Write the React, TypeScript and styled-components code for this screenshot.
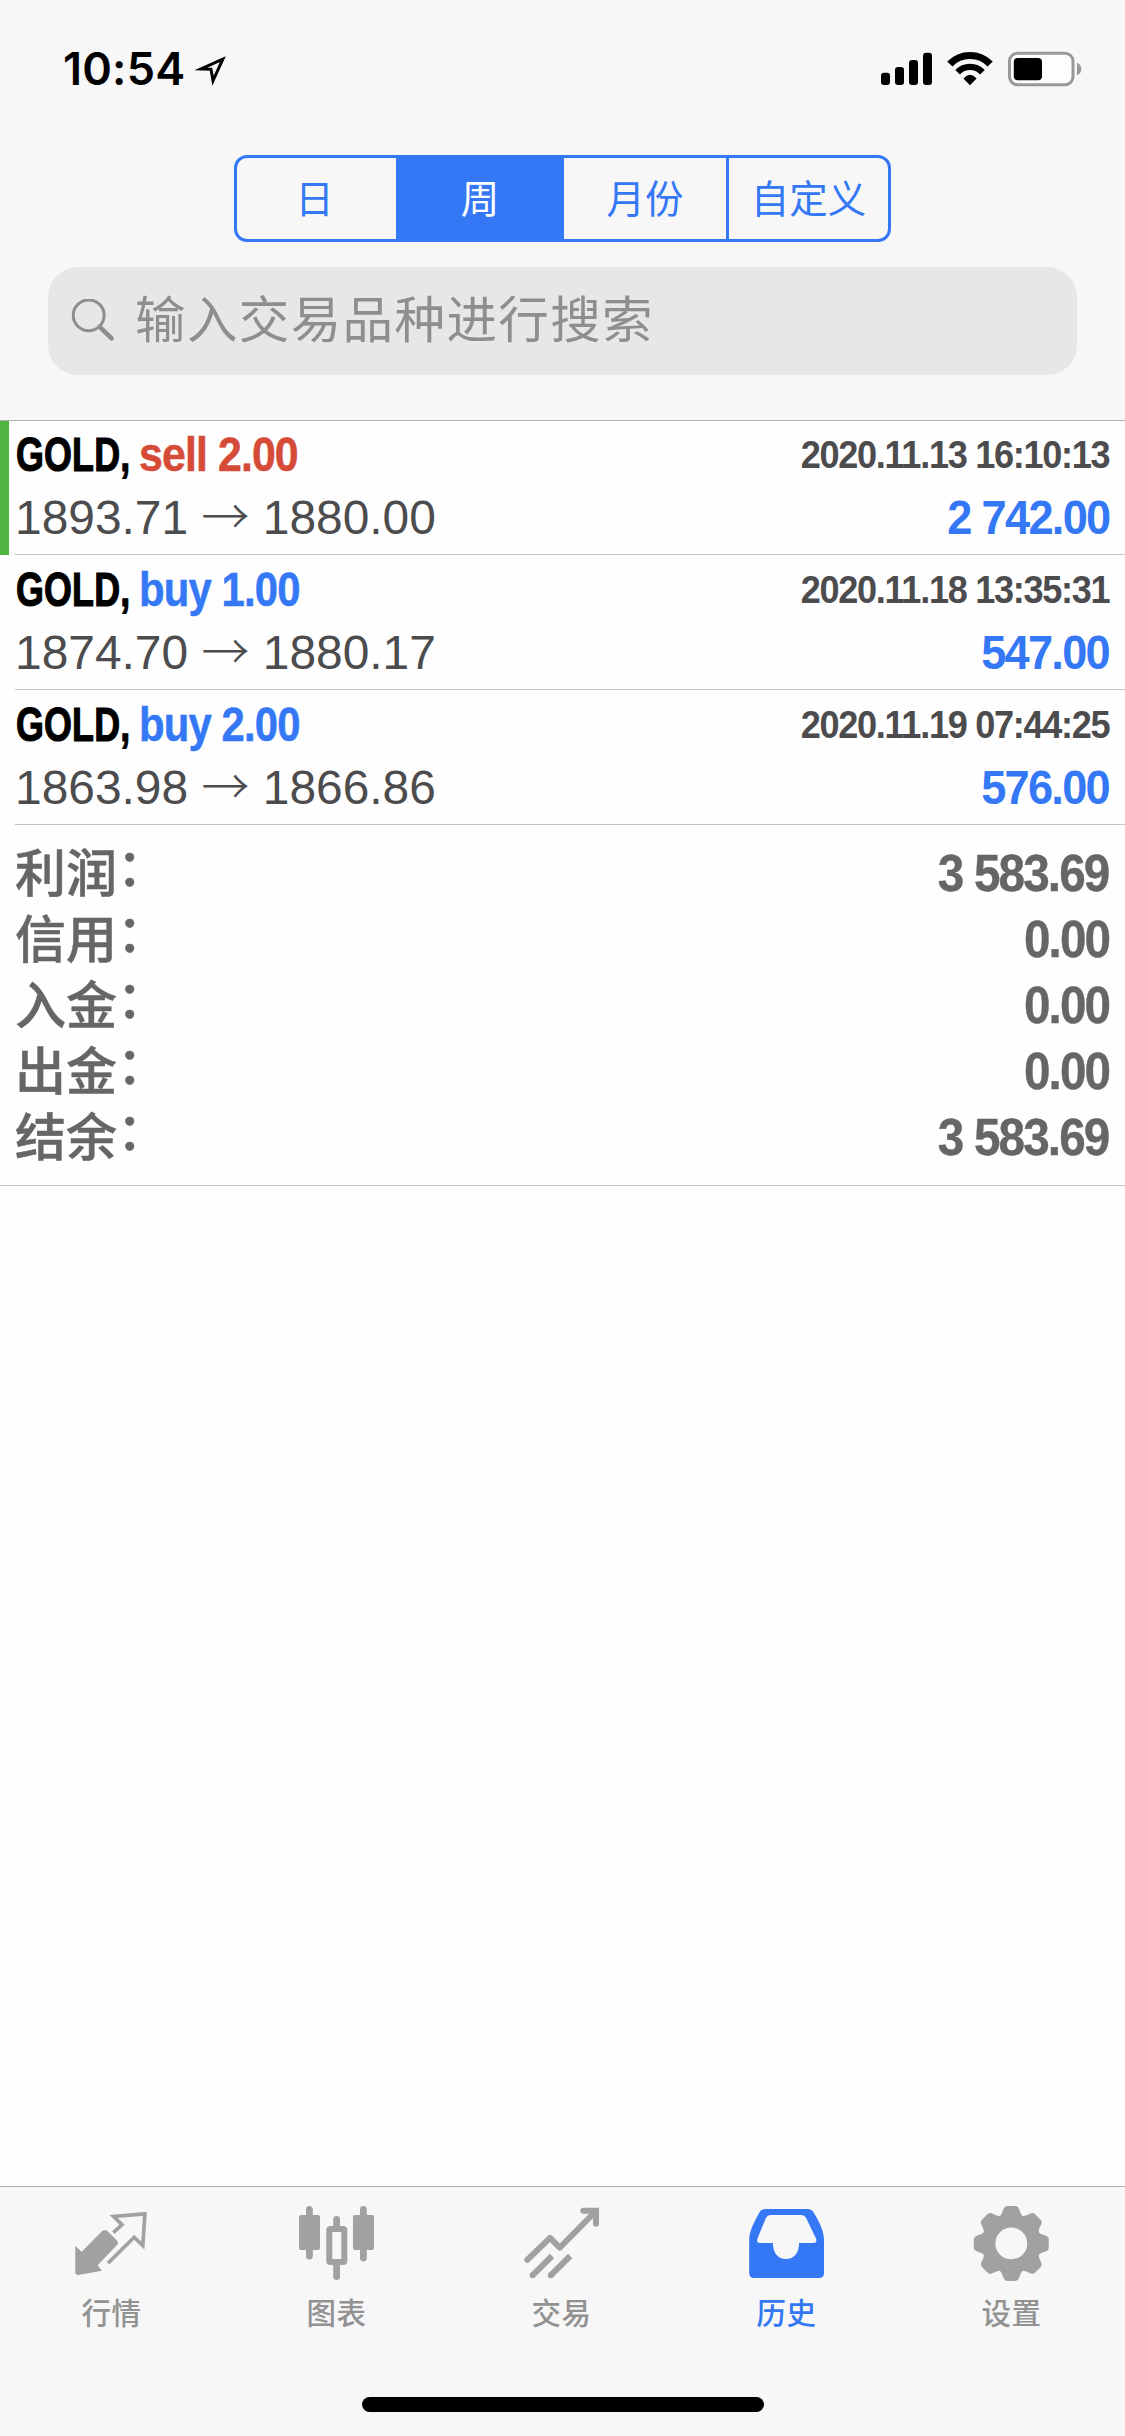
import React from "react";
import styled, { createGlobalStyle } from "styled-components";

const blue = "#3478f6";
const red = "#d64a38";
const latin = '"Liberation Sans", Arial, "Noto Sans CJK SC", sans-serif';
const han = '"Noto Sans CJK SC", "Liberation Sans", sans-serif';

const GlobalStyle = createGlobalStyle`
  * { box-sizing: border-box; }
  body { margin: 0; background: #fefefe; font-family: ${latin}; }
`;

const Screen = styled.div`
  width: 1125px;
  height: 2436px;
  display: flex;
  flex-direction: column;
  background: #fefefe;
  overflow: hidden;
`;

const Header = styled.header`
  flex: none;
  height: 421px;
  display: flex;
  flex-direction: column;
  align-items: center;
  background: #f7f7f7;
  border-bottom: 1px solid #b2b2b2;
`;

const StatusBar = styled.div`
  width: 100%;
  height: 155px;
  padding: 41px 43px 0 63px;
  display: flex;
  justify-content: space-between;
  align-items: flex-start;
`;

const StatusGroup = styled.div`
  display: flex;
  align-items: flex-start;
  gap: 10px;
`;

const Time = styled.span`
  font: 600 45px/56px Inter, sans-serif;
  letter-spacing: 0.2px;
  width: 118px;
  white-space: nowrap;
  color: #000;
`;

const Segments = styled.div`
  display: flex;
  width: 657px;
  height: 87px;
  border: 3px solid ${blue};
  border-radius: 13px;
  overflow: hidden;
`;

const Segment = styled.button<{ $active?: boolean; $width: number; $divided?: boolean }>`
  width: ${(p) => p.$width}px;
  flex: none;
  padding: 0 0 4px;
  border: 0;
  border-left: ${(p) => (p.$divided ? `3px solid ${blue}` : "0")};
  background: ${(p) => (p.$active ? blue : "transparent")};
  color: ${(p) => (p.$active ? "#fff" : blue)};
  font: 400 38.5px/77px ${han};

  &:first-child {
    padding-right: 4px;
  }
`;

const SearchField = styled.div`
  width: 1029px;
  height: 108px;
  margin-top: 25px;
  padding: 0 23px;
  display: flex;
  align-items: center;
  gap: 20px;
  border-radius: 30px;
  background: #e7e7e7;
  color: #8e8e8e;
`;

const Placeholder = styled.span`
  padding-bottom: 10px;
  font: 400 50.5px/76px ${han};
  letter-spacing: 1.4px;
`;

const Deal = styled.article<{ $marked?: boolean }>`
  flex: none;
  height: ${(p) => (p.$marked ? 134 : 135)}px;
  display: flex;
  border-left: 9px solid ${(p) => (p.$marked ? "#50b441" : "transparent")};
`;

const DealBody = styled.div<{ $first?: boolean }>`
  flex: 1;
  margin-left: 6px;
  padding: ${(p) => (p.$first ? 3 : 4)}px 16px 0 0;
  border-bottom: 1px solid #c6c6c8;
`;

const DealLine = styled.div<{ $height: number }>`
  display: flex;
  justify-content: space-between;
  height: ${(p) => p.$height}px;
  line-height: ${(p) => p.$height}px;
`;

const Title = styled.div`
  display: flex;
  padding-left: 1px;
`;

const Condensed = styled.span<{
  $scale: number;
  $size: number;
  $color: string;
  $width?: number;
  $right?: boolean;
  $spacing?: number;
  $stroke?: number;
}>`
  display: inline-block;
  width: ${(p) => (p.$width ? `${p.$width}px` : "auto")};
  font-family: ${latin};
  font-weight: 700;
  font-size: ${(p) => p.$size}px;
  letter-spacing: ${(p) => p.$spacing ?? 0}px;
  color: ${(p) => p.$color};
  white-space: nowrap;
  -webkit-text-stroke: ${(p) => p.$stroke ?? 0}px ${(p) => p.$color};
  transform: scaleX(${(p) => p.$scale});
  transform-origin: ${(p) => (p.$right ? "right" : "left")} center;
`;

const Prices = styled.span`
  font-size: 47.9px;
  color: #4c4c4e;
  white-space: nowrap;
`;

const Arrow = styled.span`
  display: inline-block;
  width: 48px;
  font-family: ${han};
  font-weight: 300;
  line-height: 1;
`;

const Summary = styled.section`
  flex: none;
  height: 361px;
  padding: 16px 16px 0 15px;
  border-bottom: 1px solid #c6c6c8;
`;

const SummaryRow = styled.div`
  height: 66px;
  display: flex;
  justify-content: space-between;
  line-height: 66px;
`;

const SummaryLabel = styled.span`
  padding-top: 1px;
  font: 500 51px/66px ${latin};
  color: #666;
  -webkit-text-stroke: 0.5px #666;
`;

const Colon = styled.span`
  line-height: 1;
  vertical-align: 6px;
`;

const TabBar = styled.nav`
  flex: none;
  height: 250px;
  margin-top: auto;
  display: flex;
  flex-direction: column;
  align-items: center;
  background: #f7f7f7;
  border-top: 1px solid #b0b0b0;
`;

const Tabs = styled.div`
  width: 100%;
  height: 210px;
  display: flex;
`;

const Tab = styled.button<{ $active?: boolean }>`
  flex: 1;
  padding: 13px 0 0;
  border: 0;
  background: none;
  display: flex;
  flex-direction: column;
  align-items: center;
  color: ${(p) => (p.$active ? blue : "#a1a1a1")};
`;

const TabLabel = styled.span<{ $active?: boolean }>`
  margin-top: 5px;
  padding-right: 2px;
  font: 500 29.5px/44px ${han};
  letter-spacing: 0.6px;
  color: ${(p) => (p.$active ? blue : "#929292")};
`;

const HomeIndicator = styled.div`
  width: 402px;
  height: 15px;
  border-radius: 8px;
  background: #000;
`;

const LocationIcon = () => (
  <svg width="38" height="50" viewBox="0 0 38 50">
    <path
      d="M31.8 18.2 L10 27.9 L20 28.2 L22 39.8 Z"
      fill="none"
      stroke="#000"
      strokeWidth="3"
      strokeMiterlimit="10"
    />
  </svg>
);

const StatusIcons = () => (
  <svg width="202" height="50" viewBox="880 41 202 50">
    <rect x="881" y="72.7" width="9" height="12.3" rx="3" />
    <rect x="895" y="67" width="9" height="18" rx="3" />
    <rect x="909" y="60" width="9" height="25" rx="3" />
    <rect x="923" y="52.7" width="9" height="32.3" rx="3" />
    <g fill="none" stroke="#000">
      <path d="M949.8 64 A28.2 28.2 0 0 1 990.2 64" strokeWidth="7.2" />
      <path d="M957.6 72.2 A17 17 0 0 1 982.4 72.2" strokeWidth="6.4" />
    </g>
    <path d="M963.4 78.4 Q970 71.2 976.6 78.4 L970 85.2 Z" />
    <rect x="1009.5" y="53.2" width="63.5" height="31.5" rx="8" fill="#fdfdfd" stroke="#999" strokeWidth="3" />
    <rect x="1013.8" y="58" width="28.2" height="22.2" rx="4" />
    <path d="M1077 62.7 Q1081.3 64.5 1081.3 69 Q1081.3 73.5 1077 75.3 Z" fill="#999" />
  </svg>
);

const SearchIcon = () => (
  <svg width="44" height="44" viewBox="0 0 44 44" fill="none" stroke="currentColor">
    <circle cx="17.7" cy="16.3" r="15.4" strokeWidth="3" />
    <path d="M28.6 27.8 L40.6 39.3" strokeWidth="4.6" strokeLinecap="round" />
  </svg>
);

const QuotesIcon = () => (
  <svg width="81" height="84" viewBox="0 0 81 84">
    <path
      d="M3.3 46 L9.7 51.7 L30 31.2 Q32.8 28.8 35.6 31.2 L45 40.4 Q47 43 44.5 45.6 L25.7 65.3 L30 70.7 L6 74.9 Q3.3 75 3.3 72.5 Z"
      fill="currentColor"
    />
    <path
      d="M41.3 32.7 L50 24.7 L41.6 16.5 L72.9 13.8 L70.8 45.5 L62.2 37.3 L36 63.3"
      fill="none"
      stroke="currentColor"
      strokeWidth="3.7"
    />
  </svg>
);

const ChartIcon = () => (
  <svg width="81" height="84" viewBox="0 0 81 84" fill="currentColor">
    <rect x="2" y="15" width="21" height="35" rx="2" />
    <rect x="9" y="6" width="6.8" height="53.5" rx="3.4" />
    <rect x="32.3" y="29" width="15" height="33" rx="1" fill="none" stroke="currentColor" strokeWidth="6" />
    <rect x="36.2" y="16" width="6.8" height="14" rx="3.4" />
    <rect x="36.2" y="62" width="6.8" height="18" rx="3.4" />
    <rect x="56" y="15" width="21" height="35" rx="2" />
    <rect x="63" y="6" width="6.8" height="55.5" rx="3.4" />
  </svg>
);

const TradeIcon = () => (
  <svg width="81" height="84" viewBox="0 0 81 84" fill="none" stroke="currentColor" strokeWidth="6">
    <path d="M5.3 59.8 L28 37.8 L37.8 47.6 L73.5 11.5" strokeLinecap="round" strokeLinejoin="round" />
    <path d="M61.3 10.8 H74 V23.8" strokeLinecap="round" strokeLinejoin="miter" />
    <path d="M30 56 L10.5 75.3 M48.2 56 L28.7 75.3" />
    <path d="M10.6 75.2 h0.01 M28.8 75.2 h0.01" strokeLinecap="round" />
  </svg>
);

const HistoryIcon = () => (
  <svg width="81" height="84" viewBox="0 0 81 84" fill="currentColor">
    <path
      fillRule="evenodd"
      d="M18.5 9 H60.5 Q65 9 67 13 C72.5 22.5 77 31 77 40 V73 Q77 78 72 78 H7.2 Q2.2 78 2.2 73 V40 C2.2 31 7 22.5 12.1 13 Q14 9 18.5 9 Z
      M23.5 15 Q20.5 15 19 17.7 L10.5 38.5 Q9 43 13.5 43 H25.9 C25.9 53 31 59 39 59 C47 59 52.1 53 52.1 43 H66 Q70.5 43 69 38.5 L59 17.7 Q57.5 15 54.5 15 Z"
    />
  </svg>
);

const toothAngles = [0, 45, 90, 135, 180, 225, 270, 315];

const SettingsIcon = () => (
  <svg width="81" height="84" viewBox="0 0 81 84">
    <circle cx="39.3" cy="43.4" r="22.7" fill="none" stroke="currentColor" strokeWidth="13.6" />
    {toothAngles.map((angle) => (
      <path
        key={angle}
        transform={`translate(39.3 43.4) rotate(${angle})`}
        d="M-12.5 -26.5 C-9.5 -28 -8.5 -33 -7.5 -35.2 Q-6.5 -37.5 -4 -37.5 H4 Q6.5 -37.5 7.5 -35.2 C8.5 -33 9.5 -28 12.5 -26.5 Z"
        fill="currentColor"
      />
    ))}
  </svg>
);

const periods = [
  { label: "日", width: 159 },
  { label: "周", width: 168, active: true },
  { label: "月份", width: 162 },
  { label: "自定义", width: 162, divided: true },
];

const deals = [
  { side: "sell", volume: "2.00", open: "1893.71", close: "1880.00", time: "2020.11.13 16:10:13", profit: "2 742.00" },
  { side: "buy", volume: "1.00", open: "1874.70", close: "1880.17", time: "2020.11.18 13:35:31", profit: "547.00" },
  { side: "buy", volume: "2.00", open: "1863.98", close: "1866.86", time: "2020.11.19 07:44:25", profit: "576.00" },
];

const totals = [
  ["利润", "3 583.69"],
  ["信用", "0.00"],
  ["入金", "0.00"],
  ["出金", "0.00"],
  ["结余", "3 583.69"],
];

const tabs = [
  { label: "行情", Icon: QuotesIcon },
  { label: "图表", Icon: ChartIcon },
  { label: "交易", Icon: TradeIcon },
  { label: "历史", Icon: HistoryIcon, active: true },
  { label: "设置", Icon: SettingsIcon },
];

export default function App() {
  return (
    <Screen lang="zh-CN">
      <GlobalStyle />
      <Header>
        <StatusBar>
          <StatusGroup>
            <Time>10:54</Time>
            <LocationIcon />
          </StatusGroup>
          <StatusIcons />
        </StatusBar>
        <Segments>
          {periods.map((p) => (
            <Segment key={p.label} $width={p.width} $active={p.active} $divided={p.divided}>
              {p.label}
            </Segment>
          ))}
        </Segments>
        <SearchField>
          <SearchIcon />
          <Placeholder>输入交易品种进行搜索</Placeholder>
        </SearchField>
      </Header>

      {deals.map((d, i) => (
        <Deal key={d.time} $marked={i === 0}>
          <DealBody $first={i === 0}>
            <DealLine $height={62}>
              <Title>
                <Condensed $scale={0.755} $size={47.5} $color="#000" $width={122.5} $spacing={0.2} $stroke={1.2}>
                  GOLD,
                </Condensed>
                <Condensed
                  $scale={d.side === "sell" ? 0.893 : 0.872}
                  $size={48}
                  $color={d.side === "sell" ? red : blue}
                  $spacing={-1}
                  $stroke={0.5}
                >
                  {d.side} {d.volume}
                </Condensed>
              </Title>
              <Condensed $scale={0.926} $size={39} $color="#4c4c4e" $spacing={-1.4} $right>
                {d.time}
              </Condensed>
            </DealLine>
            <DealLine $height={63}>
              <Prices>
                {d.open} <Arrow>→</Arrow> {d.close}
              </Prices>
              <Condensed $scale={0.94} $size={48} $color={blue} $spacing={-1.8} $right>
                {d.profit}
              </Condensed>
            </DealLine>
          </DealBody>
        </Deal>
      ))}

      <Summary>
        {totals.map(([label, value]) => (
          <SummaryRow key={label}>
            <SummaryLabel>
              {label}
              <Colon>：</Colon>
            </SummaryLabel>
            <Condensed $scale={0.935} $size={51} $color="#666" $spacing={-2} $stroke={0.4} $right>
              {value}
            </Condensed>
          </SummaryRow>
        ))}
      </Summary>

      <TabBar>
        <Tabs>
          {tabs.map(({ label, Icon, active }) => (
            <Tab key={label} $active={active}>
              <Icon />
              <TabLabel $active={active}>{label}</TabLabel>
            </Tab>
          ))}
        </Tabs>
        <HomeIndicator />
      </TabBar>
    </Screen>
  );
}
